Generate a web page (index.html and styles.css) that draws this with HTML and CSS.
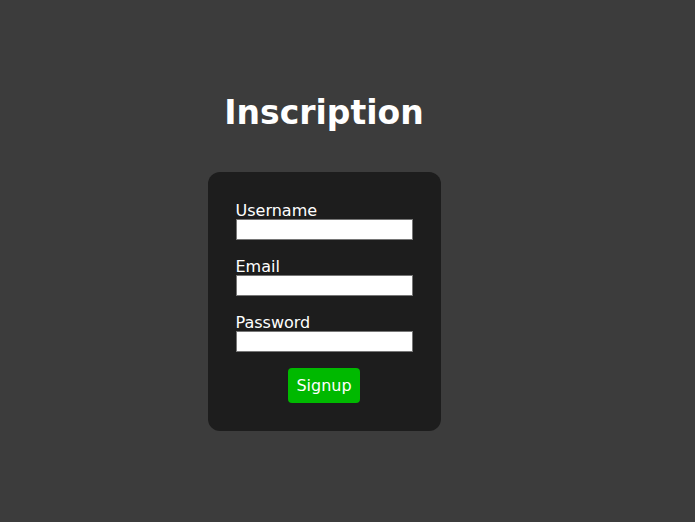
FILE: index.html
```html
<!DOCTYPE html>
<html lang="fr">
<head>
<meta charset="utf-8">
<title>Inscription</title>
<link rel="stylesheet" href="styles.css">
</head>
<body>
<div class="page">
  <h1 class="title">Inscription</h1>
  <form class="card">
    <div class="field">
      <label class="label" for="u">Username</label>
      <input class="input" id="u" type="text">
    </div>
    <div class="field">
      <label class="label" for="e">Email</label>
      <input class="input" id="e" type="email">
    </div>
    <div class="field">
      <label class="label" for="p">Password</label>
      <input class="input" id="p" type="password">
    </div>
    <button class="btn" type="button">Signup</button>
  </form>
</div>
</body>
</html>
```
FILE: styles.css
```css
html, body {
  margin: 0;
  padding: 0;
  background: #3c3c3c;
  font-family: "DejaVu Sans", Verdana, sans-serif;
  color: #fff;
}
.page {
  width: 648px;
  display: flex;
  flex-direction: column;
  align-items: center;
  padding-top: 92px;
}
.title {
  margin: 0 0 38px;
  font-size: 33px;
  font-weight: bold;
  line-height: 42px;
}
.card {
  background: #1d1d1d;
  border-radius: 12px;
  padding: 28px;
  display: flex;
  flex-direction: column;
  gap: 16px;
  align-items: center;
}
.field {
  display: flex;
  flex-direction: column;
  align-items: stretch;
}
.label {
  font-size: 16px;
  line-height: 17px;
  padding-top: 2px;
}
.input {
  box-sizing: border-box;
  width: 177px;
  height: 21px;
  margin: 0;
  padding: 1px 2px;
  border: 1px solid #767676;
  background: #fff;
  font-size: 13px;
}
.btn {
  width: 72px;
  height: 35px;
  border: none;
  border-radius: 4px;
  background: #00b900;
  color: #fff;
  font-family: "DejaVu Sans", Verdana, sans-serif;
  font-size: 16px;
  padding: 0;
}
```
